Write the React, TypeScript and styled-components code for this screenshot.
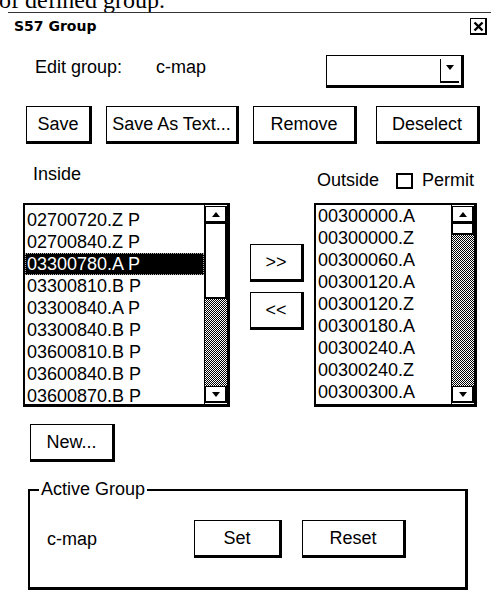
import React from 'react';
import styled, { createGlobalStyle, css } from 'styled-components';

const GlobalStyle = createGlobalStyle`
  html, body {
    margin: 0;
    padding: 0;
    background: #fff;
  }
  body {
    font-family: "Liberation Sans", Arial, sans-serif;
    color: #000;
  }
`;

const Page = styled.div`
  width: 491px;
  height: 608px;
  overflow: hidden;
  background: #fff;
`;

// the cut-off line of document text above the figure
const DocCut = styled.div`
  height: 12px;
  overflow: hidden;
`;

const DocText = styled.p`
  margin: -12px 0 0 -1px;
  font-family: "Liberation Serif", "Times New Roman", serif;
  font-size: 24px;
  line-height: 24px;
  white-space: nowrap;
`;

const Rule = styled.div`
  height: 1px;
  margin-left: 8px;
  background: #333;
`;

const TitleBar = styled.div`
  display: flex;
  align-items: flex-start;
  justify-content: space-between;
  height: 17px;
  margin-top: 5px;
  padding: 0 4px 0 14px;
`;

const Title = styled.h1`
  margin: 0;
  font: bold 14px/17px "DejaVu Sans", Verdana, sans-serif;
`;

const CloseBox = styled.div`
  width: 17px;
  height: 17px;
  box-sizing: border-box;
  border: 1px solid #000;
  border-right-width: 2px;
  border-bottom-width: 2px;
  display: flex;
  align-items: center;
  justify-content: center;
`;

const EditRow = styled.div`
  display: flex;
  align-items: flex-start;
  height: 33px;
  margin-top: 20px;
  padding: 0 27px 0 35px;
`;

const Text = styled.span<{ $w?: number }>`
  display: block;
  font-size: 18px;
  line-height: 21px;
  white-space: nowrap;
  ${(p) => p.$w && css`width: ${p.$w}px;`}
`;

const FieldText = styled(Text)`
  margin-top: 2px;
`;

const Dropdown = styled.div`
  width: 138px;
  height: 33px;
  margin-left: auto;
  box-sizing: border-box;
  border: 1px solid #000;
  border-right-width: 3px;
  border-bottom-width: 3px;
  display: flex;
  justify-content: flex-end;
  padding: 3px 2px 2px 0;
`;

const DropButton = styled.div`
  width: 19px;
  box-sizing: border-box;
  border-left: 1px solid #000;
  border-bottom: 2px solid #000;
  display: flex;
  align-items: flex-start;
  justify-content: center;
  padding-top: 6px;
`;

const Arrow = styled.span<{ $up?: boolean }>`
  width: 0;
  height: 0;
  border-left: 4px solid transparent;
  border-right: 4px solid transparent;
  ${(p) =>
    p.$up
      ? css`border-bottom: 5px solid #000;`
      : css`border-top: 5px solid #000;`}
`;

const ButtonRow = styled.div`
  display: flex;
  gap: 14px;
  margin-top: 18px;
  padding: 0 11px 0 26px;
`;

const Btn = styled.button<{ $w: number; $push?: boolean }>`
  width: ${(p) => p.$w}px;
  height: 38px;
  box-sizing: border-box;
  padding: 0;
  background: #fff;
  color: #000;
  border-style: solid;
  border-color: #000;
  border-width: 1px 3px 3px 1px;
  font-family: "Liberation Sans", Arial, sans-serif;
  font-size: 18px;
  white-space: nowrap;
  ${(p) => p.$push && css`margin-left: auto;`}
`;

const LabelRow = styled.div`
  display: flex;
  align-items: flex-start;
  height: 39px;
  margin-top: 20px;
  padding-left: 33px;
`;

const OutsideGroup = styled.div`
  display: flex;
  align-items: flex-start;
  margin-top: 6px;
`;

const CheckBox = styled.span`
  width: 17px;
  height: 16px;
  box-sizing: border-box;
  margin: 3px 9px 0 17px;
  border: 2px solid #000;
`;

const ListsRow = styled.div`
  display: flex;
  align-items: flex-start;
  padding-left: 23px;
`;

const ListBox = styled.div<{ $w: number }>`
  width: ${(p) => p.$w}px;
  height: 204px;
  box-sizing: border-box;
  border: 2px solid #000;
  border-right-width: 3px;
  border-bottom-width: 3px;
  display: flex;
`;

const Items = styled.div<{ $offset: number }>`
  flex: 1;
  overflow: hidden;
  padding-top: ${(p) => p.$offset}px;
`;

const Item = styled.div<{ $selected?: boolean }>`
  height: 22px;
  line-height: 22px;
  padding-left: 2px;
  font-size: 18px;
  white-space: nowrap;
  ${(p) =>
    p.$selected &&
    css`
      background: #000;
      color: #fff;
      outline: 1px dotted #aaa;
      outline-offset: -1px;
    `}
`;

const ScrollBar = styled.div`
  width: 23px;
  box-sizing: border-box;
  border-left: 1px solid #000;
  display: flex;
  flex-direction: column;
  padding: 1px 0;
`;

const ScrollBtn = styled.div`
  height: 17px;
  flex: none;
  box-sizing: border-box;
  border: 1px solid #000;
  border-right-width: 2px;
  border-bottom-width: 2px;
  display: flex;
  align-items: center;
  justify-content: center;
`;

const Thumb = styled.div<{ $h: number }>`
  height: ${(p) => p.$h}px;
  flex: none;
  box-sizing: border-box;
  background: #fff;
  border: 1px solid #000;
  border-right-width: 2px;
  border-bottom-width: 2px;
`;

const Track = styled.div`
  flex: 1;
  background: repeating-conic-gradient(#000 0 25%, #fff 0 50%) 0 0 / 2px 2px;
`;

const Movers = styled.div`
  display: flex;
  flex-direction: column;
  gap: 10px;
  margin: 41px 10px 0 20px;
`;

const NewRow = styled.div`
  margin: 17px 0 0 30px;
`;

const GroupBox = styled.fieldset`
  width: 440px;
  box-sizing: border-box;
  margin: 17px 0 0 28px;
  padding: 0;
  border: 2px solid #000;
  border-right-width: 3px;
  border-bottom-width: 3px;
`;

const GroupLegend = styled.legend`
  margin-left: 9px;
  padding: 0 2px;
  font-size: 18px;
  line-height: 21px;
`;

const GroupContent = styled.div`
  display: flex;
  align-items: center;
  gap: 20px;
  padding: 20px 0 29px 17px;
`;

const inside = [
  '02700720.Z P',
  '02700840.Z P',
  '03300780.A P',
  '03300810.B P',
  '03300840.A P',
  '03300840.B P',
  '03600810.B P',
  '03600840.B P',
  '03600870.B P',
];

const outside = [
  '00300000.A',
  '00300000.Z',
  '00300060.A',
  '00300120.A',
  '00300120.Z',
  '00300180.A',
  '00300240.A',
  '00300240.Z',
  '00300300.A',
];

type ListProps = {
  items: string[];
  width: number;
  thumb: number;
  offset: number;
  selected?: number;
};

const List: React.FC<ListProps> = ({ items, width, thumb, offset, selected }) => (
  <ListBox $w={width}>
    <Items $offset={offset}>
      {items.map((it, i) => (
        <Item key={it} $selected={i === selected}>
          {it}
        </Item>
      ))}
    </Items>
    <ScrollBar>
      <ScrollBtn>
        <Arrow $up />
      </ScrollBtn>
      <Thumb $h={thumb} />
      <Track />
      <ScrollBtn>
        <Arrow />
      </ScrollBtn>
    </ScrollBar>
  </ListBox>
);

const App: React.FC = () => (
  <Page>
    <GlobalStyle />
    <DocCut>
      <DocText>of defined group.</DocText>
    </DocCut>
    <Rule />

    <TitleBar>
      <Title>S57 Group</Title>
      <CloseBox>
        <svg width="11" height="11" viewBox="0 0 11 11">
          <path d="M1.5 1.5 L9.5 9.5 M9.5 1.5 L1.5 9.5" stroke="#000" strokeWidth="2.4" />
        </svg>
      </CloseBox>
    </TitleBar>

    <EditRow>
      <FieldText $w={121}>Edit group:</FieldText>
      <FieldText>c-map</FieldText>
      <Dropdown>
        <DropButton>
          <Arrow />
        </DropButton>
      </Dropdown>
    </EditRow>

    <ButtonRow>
      <Btn $w={66}>Save</Btn>
      <Btn $w={133}>Save As Text...</Btn>
      <Btn $w={104}>Remove</Btn>
      <Btn $w={104} $push>
        Deselect
      </Btn>
    </ButtonRow>

    <LabelRow>
      <Text $w={284}>Inside</Text>
      <OutsideGroup>
        <Text>Outside</Text>
        <CheckBox />
        <Text>Permit</Text>
      </OutsideGroup>
    </LabelRow>

    <ListsRow>
      <List items={inside} width={207} thumb={76} offset={4} selected={2} />
      <Movers>
        <Btn $w={54}>&gt;&gt;</Btn>
        <Btn $w={54}>&lt;&lt;</Btn>
      </Movers>
      <List items={outside} width={163} thumb={12} offset={0} />
    </ListsRow>

    <NewRow>
      <Btn $w={85}>New...</Btn>
    </NewRow>

    <GroupBox>
      <GroupLegend>Active Group</GroupLegend>
      <GroupContent>
        <Text $w={127}>c-map</Text>
        <Btn $w={88}>Set</Btn>
        <Btn $w={104}>Reset</Btn>
      </GroupContent>
    </GroupBox>
  </Page>
);

export default App;
